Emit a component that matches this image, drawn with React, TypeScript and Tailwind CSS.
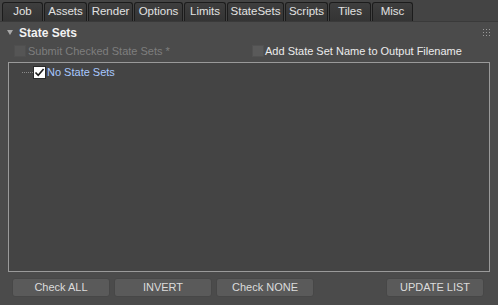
import React from "react";

const tabs: [string, number][] = [
  ["Job", 41],
  ["Assets", 43],
  ["Render", 45],
  ["Options", 49],
  ["Limits", 42],
  ["StateSets", 57],
  ["Scripts", 43],
  ["Tiles", 42],
  ["Misc", 41],
];

function Grip() {
  return (
    <svg width="7" height="7" viewBox="0 0 7 7">
      {[0, 3, 6].map((y) =>
        [0, 3, 6].map((x) => (
          <rect key={`${x}-${y}`} x={x} y={y} width="1" height="1" fill="#9a9a9a" />
        ))
      )}
    </svg>
  );
}

export default function App() {
  return (
    <div
      className="w-[498px] h-[305px] bg-[#4b4b4b] flex flex-col overflow-hidden text-[11px] leading-none"
      style={{ fontFamily: '"Liberation Sans", Arial, sans-serif' }}
    >
      {/* tab bar */}
      <div className="h-[22px] shrink-0 bg-[#444444] flex items-end pl-[2px] gap-[1px] border-b border-[#3a3a3a]">
        {tabs.map(([t, w]) => (
          <div
            key={t}
            style={{ width: w }}
            className="h-[19px] rounded-t-[3px] border border-b-0 border-[#1c1c1c] bg-gradient-to-b from-[#3e3e3e] to-[#343434] text-[#e2e2e2] text-[11.5px] flex items-center justify-center"
          >
            {t}
          </div>
        ))}
      </div>

      {/* header */}
      <div className="h-[19px] shrink-0 flex items-center pl-[7px] pr-[8px] mt-[1px]">
        <svg width="6" height="5" viewBox="0 0 6 5" className="mr-[6px]">
          <polygon points="0,0 6,0 3,5" fill="#a8a8a8" />
        </svg>
        <span className="font-bold text-[#f2f2f2] text-[12px]">State Sets</span>
        <div className="flex-1" />
        <Grip />
      </div>

      {/* options row */}
      <div className="h-[16px] shrink-0 flex items-center mt-[1px]">
        <div className="flex items-center pl-[14px] w-[252px]">
          <div className="w-[12px] h-[12px] bg-[#555555] border border-[#4f4f4f] mr-[2px]" />
          <span className="text-[#7e7e7e]">Submit Checked State Sets *</span>
        </div>
        <div className="flex items-center">
          <div className="w-[12px] h-[12px] bg-[#5a5a5a] border border-[#515151] mr-[1px]" />
          <span className="text-[#ececec]">Add State Set Name to Output Filename</span>
        </div>
      </div>

      {/* tree */}
      <div className="mx-[8px] mt-[3px] h-[210px] shrink-0 border border-[#9a9a9a] bg-[#444444] pt-[3px]">
        <div className="flex items-center h-[13px] pl-[13px]">
          <div className="w-[11px] border-t border-dotted border-[#8a8a8a]" />
          <div className="w-[13px] h-[13px] bg-white border border-[#2a2a2a] flex items-center justify-center">
            <svg width="11" height="11" viewBox="0 0 11 11">
              <path d="M1.5 5.5 L4.2 8.3 L9.6 2" stroke="#1a1a1a" strokeWidth="1.6" fill="none" />
            </svg>
          </div>
          <span className="ml-[1px] text-[#a8c8ff] text-[11px]">No State Sets</span>
        </div>
      </div>

      {/* buttons */}
      <div className="flex items-center mt-[6px] pl-[12px] pr-[14px]">
        {["Check ALL", "INVERT", "Check NONE"].map((b) => (
          <div
            key={b}
            className="w-[98px] h-[19px] mr-[4px] rounded-[3px] bg-[#5a5a5a] border border-[#474747] text-[#dcdcdc] flex items-center justify-center"
          >
            {b}
          </div>
        ))}
        <div className="flex-1" />
        <div className="w-[98px] h-[19px] rounded-[3px] bg-[#5a5a5a] border border-[#474747] text-[#dcdcdc] flex items-center justify-center">
          UPDATE LIST
        </div>
      </div>
    </div>
  );
}
